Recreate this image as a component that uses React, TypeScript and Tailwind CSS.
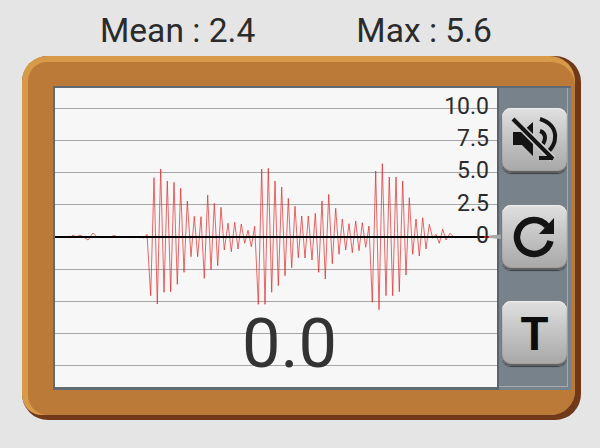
const wavePoints = [
  [54, 236.7], [68, 236.7], [70, 238], [73, 235], [76, 237], [80, 235], [83, 236.7], [88, 240], [93, 233], [97, 236.7],
  [110, 237], [114, 235.5], [118, 237], [140, 236.7],
  [144, 238], [147, 234.3], [150.7, 295.7], [154, 177.7], [157.3, 304], [160.7, 169], [164, 292.3], [167.3, 181], [170.7, 291.7],
  [174, 182.3], [177.3, 284.3], [180.7, 188.3], [184, 272.3], [187.3, 201], [191, 256.7], [194.3, 216.3], [197.7, 256.7],
  [201, 216.7], [204.3, 278.3], [207.7, 195], [211, 270], [214.3, 203.3], [217.7, 265.7], [221, 207.3], [224.3, 250],
  [228, 223.3], [231.3, 251.7], [234.7, 222.3], [238, 249], [241.3, 224], [244.7, 243.3], [248, 230.3], [251.3, 246.7],
  [254.7, 226.3], [258.3, 304.3], [261.7, 169], [265, 304.3], [268.3, 168.3], [271.7, 292.3], [275, 181], [278.3, 285.7],
  [281.7, 187], [285, 275.7], [288.3, 198.3], [291.7, 267.7], [295, 206.3], [298.3, 257.7], [301.7, 216],
  [305, 258], [308.3, 216], [312, 260], [315.3, 213.3], [318.7, 272.3], [322, 201], [325.3, 279], [328.7, 194.3],
  [332.3, 263.7], [335.7, 208.3], [339, 254.3], [342.3, 219], [345.7, 250], [349, 223.7], [352.3, 252.7], [355.7, 221],
  [359, 250.7], [362.3, 222.7], [365.7, 247.3], [369, 226], [372.3, 302.3], [375.7, 171], [379, 309.7], [382.3, 163.7],
  [386, 295.7], [389.3, 177], [392.7, 295.7], [396, 177], [399.3, 291.7], [402.7, 181], [406, 275], [409.3, 197.7],
  [412.7, 254.3], [416, 219], [419.3, 256], [422.7, 217.7], [426, 249], [429.3, 224.3], [432.7, 238.3], [436, 234.3],
  [439.3, 243.3], [442.7, 229.3], [446, 240], [450, 233.3], [453.3, 236.7],
];

const gridLines = [108, 140, 172, 204, 269, 301, 333, 365];
const axisLabels = [
  { text: "10.0", top: 93 },
  { text: "7.5", top: 125 },
  { text: "5.0", top: 157 },
  { text: "2.5", top: 190 },
  { text: "0", top: 222 },
];

const SquareButton = ({ children }: { children: React.ReactNode }) => (
  <button className="w-[65px] h-[65px] rounded-[9px] bg-gradient-to-b from-[#e0e0e0] to-[#a6a6a6] flex items-center justify-center shadow-[inset_0_1px_0_#efefef,inset_0_-2px_1px_#5c5c5c,0_1px_1px_#3c4348]">
    {children}
  </button>
);

const App = () => {
  return (
    <div className="w-[600px] h-[448px] bg-[#e5e5e5] overflow-hidden font-['Roboto',sans-serif] text-[#2b2b2b]">
      <div className="h-[56px] flex items-center pt-[6px] text-[33.6px] leading-none">
        <span className="ml-[100px]">Mean : 2.4</span>
        <span className="ml-[101px]">Max : 5.6</span>
      </div>

      {/* wood frame: dark edge, light edge, then the flat orange */}
      <div className="ml-[22px] w-[559px] h-[364px] rounded-[26px] bg-[#703a1a] pr-[6px] pb-[5px]">
        <div className="w-full h-full rounded-tl-[25px] rounded-tr-[25px] rounded-br-[25px] rounded-bl-[20px] bg-[#d69a48] pt-[6px] pl-[6px]">
          <div className="w-full h-full rounded-tl-[19px] rounded-tr-[24px] rounded-bl-[20px] rounded-br-[24px] bg-[#bc7a38] pt-[24px] pl-[25px]">
            <div className="w-[518px] h-[304px] flex border-t-2 border-l-2 border-[#5f6a72]">
              <div className="relative w-[442px] h-full bg-[#f7f7f7] border-b-[3px] border-[#5f6a72]">
                <svg className="absolute left-0 top-0" width="442" height="299" viewBox="55 88 442 299">
                  {gridLines.map((y) => (
                    <line key={y} x1="55" x2="497" y1={y + 0.5} y2={y + 0.5} stroke="#a6a6a6" strokeWidth="1" />
                  ))}
                  <polyline
                    points={wavePoints.map((p) => p.join(",")).join(" ")}
                    fill="none"
                    stroke="#dc2a2a"
                    strokeWidth="0.7"
                  />
                  <line x1="55" x2="485" y1="237" y2="237" stroke="#000" strokeWidth="2" />
                  <line x1="484" x2="490" y1="237" y2="237" stroke="#d81a20" strokeWidth="2" />
                </svg>
                {axisLabels.map((label) => (
                  <span
                    key={label.text}
                    className="absolute right-[8px] text-[23px] leading-[28px] text-[#2b2b2b]"
                    style={{ top: label.top - 88 }}
                  >
                    {label.text}
                  </span>
                ))}
                <span className="absolute left-[187px] top-[216px] text-[68.5px] leading-[80px] text-[#333]">0.0</span>
              </div>

              <div className="relative flex-1 bg-[#78828a] border-l-2 border-[#596369] pr-[3px] pb-[3px]">
                {/* pointer from the zero line */}
                <svg className="absolute left-[-10px] top-[146px]" width="12" height="6" viewBox="0 0 12 6">
                  <polygon points="0,1.5 12,0.5 12,5 0,4" fill="#a6a6a6" />
                </svg>
                <div className="h-full border-r border-b border-[#a3abaf] pl-[3px] pt-[20px] flex flex-col gap-[31.5px]">
                  <SquareButton>
                    <svg width="65" height="65" viewBox="0 0 65 65">
                      <path d="M11 24h9l11-10v34l-11-11h-9z" fill="#141414" />
                      <path d="M38 11c10 3 16 10 15 19c0 5-3 10-7 14" fill="none" stroke="#141414" strokeWidth="4" />
                      <path d="M38 23c3 1 5 4 5 7c0 2-1 4-2 6" fill="none" stroke="#141414" strokeWidth="4" />
                      <path d="M11 11l40 40" stroke="#cfcfcf" strokeWidth="7" />
                      <path d="M11 11l40 40M37 50h14" stroke="#141414" strokeWidth="4" />
                    </svg>
                  </SquareButton>
                  <SquareButton>
                    <svg width="65" height="65" viewBox="0 0 65 65">
                      <path d="M45 21A17 17 0 1 0 48.5 36" fill="none" stroke="#141414" strokeWidth="6.5" />
                      <path d="M52 13v16h-15z" fill="#141414" />
                    </svg>
                  </SquareButton>
                  <SquareButton>
                    <span className="font-bold text-[46px] leading-none text-[#0c0c0c]">T</span>
                  </SquareButton>
                </div>
              </div>
            </div>
          </div>
        </div>
      </div>
    </div>
  );
};

export default App;
